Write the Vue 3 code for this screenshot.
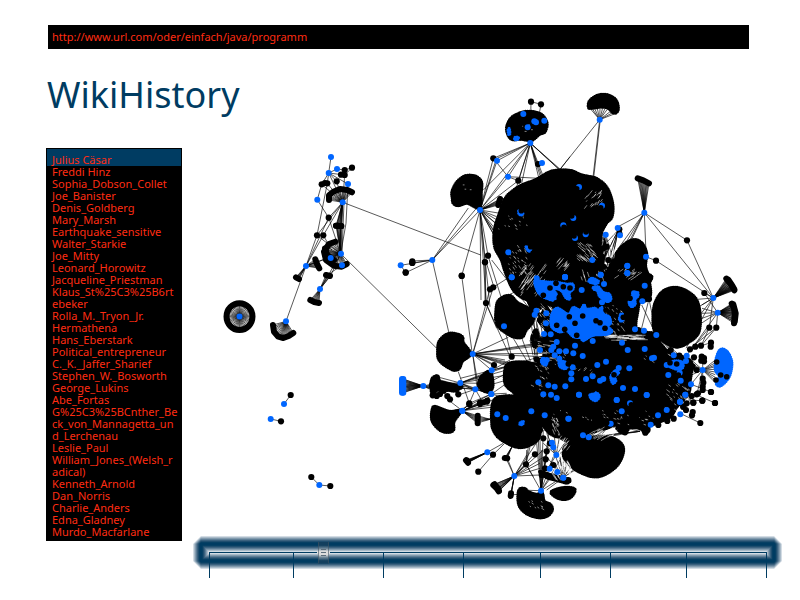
<script setup>
import { ref } from 'vue'

const address = ref('http://www.url.com/oder/einfach/java/programm')
const moment = ref(108)
const selected = ref('Julius Cäsar')

const authors = [
  'Julius Cäsar', 'Freddi Hinz', 'Sophia_Dobson_Collet', 'Joe_Banister', 'Denis_Goldberg',
  'Mary_Marsh', 'Earthquake_sensitive', 'Walter_Starkie', 'Joe_Mitty', 'Leonard_Horowitz',
  'Jacqueline_Priestman', 'Klaus_St%25C3%25B6rtebeker', 'Rolla_M._Tryon_Jr.', 'Hermathena',
  'Hans_Eberstark', 'Political_entrepreneur', 'C._K._Jaffer_Sharief', 'Stephen_W._Bosworth',
  'George_Lukins', 'Abe_Fortas', 'G%25C3%25BCnther_Beck_von_Mannagetta_und_Lerchenau',
  'Leslie_Paul', 'William_Jones_(Welsh_radical)', 'Kenneth_Arnold', 'Dan_Norris',
  'Charlie_Anders', 'Edna_Gladney', 'Murdo_Macfarlane'
]

// Glow around the time line: widest and palest stroke first.
const glow = [
  ['16', '#dde4ea'], ['15', '#c9d4dd'], ['14', '#b3c2ce'], ['13', '#9fb2c1'], ['12', '#8ca3b5'],
  ['11', '#7893a8'], ['10', '#66859c'], ['9', '#547690'], ['8', '#436984'], ['7', '#345d7b'],
  ['6', '#265373'], ['5', '#194b6c'], ['4', '#0e4467'], ['3', '#003c62']
]

// ---- graph -------------------------------------------------------------
// Each sector keeps its coordinates in thirds of a unit, relative to its corner.
const edges = []
const spokes = []
const strings = []
const masses = []
const patches = []
const blacks = []
const blues = []
const bites = []
const scratches = []

let seed = 7
const rnd = () => {
  seed = (seed * 16807) % 2147483647
  return seed / 2147483647
}
const r1 = (n) => Math.round(n * 10) / 10

function smooth(p) {
  const n = p.length
  let d = `M${p[0][0]} ${p[0][1]}`
  for (let i = 0; i < n; i++) {
    const a = p[(i + n - 1) % n], b = p[i], c = p[(i + 1) % n], e = p[(i + 2) % n]
    d += `C${r1(b[0] + (c[0] - a[0]) / 6)} ${r1(b[1] + (c[1] - a[1]) / 6)} ` +
      `${r1(c[0] - (e[0] - b[0]) / 6)} ${r1(c[1] - (e[1] - b[1]) / 6)} ${c[0]} ${c[1]}`
  }
  return d + 'Z'
}

function sector(ox, oy) {
  const pts = (s) => {
    const v = s.trim().split(/[\s,]+/).map(Number)
    const out = []
    for (let i = 0; i < v.length; i += 2) out.push([r1(ox + v[i] / 3), r1(oy + v[i + 1] / 3)])
    return out
  }
  const s = {
    links(...list) {
      for (const l of list) edges.push(pts(l).map((p) => p.join(' ')).join(','))
      return s
    },
    star(hub, ends) {
      const [h] = pts(hub)
      for (const e of pts(ends)) edges.push(`${h[0]} ${h[1]},${e[0]} ${e[1]}`)
      return s
    },
    fan(hub, line, count = 10, color = '#000') {
      const [h] = pts(hub)
      const p = pts(line)
      for (let i = 0; i < count; i++) {
        const t = (i / (count - 1)) * (p.length - 1)
        const k = Math.min(Math.floor(t), p.length - 2)
        const f = t - k
        spokes.push([h[0], h[1], r1(p[k][0] + (p[k + 1][0] - p[k][0]) * f), r1(p[k][1] + (p[k + 1][1] - p[k][1]) * f)])
      }
      strings.push({ points: p.map((q) => q.join(' ')).join(','), color })
      return s
    },
    mass(...list) { for (const l of list) masses.push(smooth(pts(l))); return s },
    patch(...list) { for (const l of list) patches.push(smooth(pts(l))); return s },
    black(l) { blacks.push(...pts(l)); return s },
    blue(l) { blues.push(...pts(l)); return s },
    bite(l) { bites.push(...pts(l)); return s },
    // Pale gaps that show between tightly packed links.
    scratch(x, y, w, h, count, dx, dy) {
      for (let i = 0; i < count; i++) {
        const [a] = pts(`${x + rnd() * w} ${y + rnd() * h}`)
        const k = 0.3 + rnd() * 0.7
        scratches.push([a[0], a[1], r1(a[0] + dx * k), r1(a[1] + dy * k)])
      }
      return s
    }
  }
  return s
}

// Lone ring of pages
const ring = Array.from({ length: 44 }, (_, i) => {
  const a = (i / 44) * Math.PI * 2
  return [r1(239.5 + 13 * Math.cos(a)), r1(316.6 + 13.4 * Math.sin(a))]
})

// West
sector(210, 140)
  .links('363 51 356 99 335 133 322 179 356 233', '356 99 352 130 321 286 288 378', '356 99 381 87 404 90 426 83',
    '356 99 380 124 398 187', '352 130 398 187', '404 105 398 187', '414 132 398 187', '426 83 404 105', '356 99 398 187',
    '356 99 414 132 408 250 392 341', '398 187 356 233', '398 187 321 286', '398 187 340 286 288 378', '398 187 380 257 392 341',
    '398 187 393 341', '402 187 396 341', '394 187 390 341', '398 187 386 341', '356 233 392 341', '321 286 392 341', '340 286 365 330',
    '288 378 228 544', '288 378 392 341', '288 378 350 355', '330 447 354 407 392 341', '330 447 362 407 392 341', '396 376 352 405',
    '356 233 288 378', '398 187 812 345', '392 341 680 625', '335 133 398 187', '356 99 387 103')
  .fan('228 544', '189 555 192 575 205 590 220 594 236 588 250 579', 18)
  .fan('330 447', '301 480 313 486 327 489', 8)
  .fan('330 447', '348 405 360 408', 4)
  .fan('398 187', '357 180 357 166 370 155 390 147 412 150 426 157', 16)
  .fan('392 341', '376 305 357 312 342 335 348 360 372 377 395 380 410 372', 22)
  .fan('288 378', '258 412 267 417', 6)
  .fan('288 378', '316 358 321 372 328 385', 7)
  .fan('398 187', '378 257 394 258', 7)
  .fan('392 341', '378 257 394 258', 7)
  .fan('392 341', '345 325 352 345 372 360', 7)
  .black('335 133 352 130 345 129 380 124 404 90 426 83 404 105 393 104 356 233 321 286 340 286')
  .blue('363 51 381 87 356 99 414 132 322 179 398 187 393 341 396 376 288 378 330 447 228 544 362 354')

// Small separate groups
sector(260, 380)
  .links('72 72 92 45', '32 117 63 124', '154 291 178 315 211 318')
  .black('92 45 63 124 154 291 211 318')
  .blue('72 72 32 117 178 315')

// North
sector(380, 80)
  .links('453 65 483 73', '453 65 452 110', '483 73 476 110', '415 302 384 290 340 235', '384 290 500 296', '157 540 62 556', '157 540 77 578 62 556',
    '157 540 97 543', '157 540 97 549', '157 540 207 760', '570 230 535 275', '315 547 315 665', '324 527 385 720', '245 587 277 822')
  .star('451 189', '340 235 350 243 345 238 300 390 310 330 384 290 415 302 410 320 470 252 478 300 484 300 489 300 494 300 560 285 545 275 550 280 425 310')
  .star('300 390', '340 235 348 240 351 243 384 290 415 302 157 540 245 587 315 547 324 527 360 400 360 425 370 450 360 440 350 480 345 460 345 470 340 440 318 665 330 680 350 410 375 500 303 660')
  .star('157 540', '265 384 290 384')
  .fan('300 390', '360 357 355 375', 7)
  .mass('383 160 382 137 397 112 430 97 460 96 486 106 500 130 494 155 478 162 455 180 425 177 396 177',
    '218 355 217 335 230 308 255 289 284 289 303 305 303 335 298 382 262 369 234 376 220 368')
  .black('453 65 483 73 340 235 97 544 97 549 77 578 245 587 324 527 315 547 415 302 474 252')
  .blue('451 189 351 242 384 290 486 249 300 390 157 540 62 556 385 517 430 102 493 122 443 142 463 124 468 127 555 592 470 595 395 592')
  .patch('384 150 388 145 390 160 386 164', '405 172 415 172 414 178 404 179', '416 392 424 392 429 400 423 406 416 400', '438 500 452 506 446 514')
  .bite('424 392 452 500')
  .scratch(355, 400, 90, 50, 14, 2, 1)
  .scratch(385, 495, 55, 90, 40, 2, 3)
  .scratch(415, 110, 60, 45, 6, 2, 0)
  .scratch(430, 550, 70, 60, 34, -7, 10)
  .scratch(240, 310, 40, 20, 3, 2, 0)

// North-east
sector(560, 80)
  .links('119 119 0 268', '119 119 99 292', '121 119 101 292', '253 398 381 481 460 654', '253 398 165 445', '253 398 460 654', '253 398 175 505',
    '253 398 190 500', '253 398 210 480', '253 398 264 660', '253 398 215 478', '258 530 288 542 460 654')
  .fan('253 398', '233 295 250 301 267 310', 12)
  .star('119 119', '90 85 98 88 105 88 112 85 120 85 128 83 135 86 142 88 150 95 158 98 165 101')
  .mass('87 83 88 66 103 52 125 44 150 48 168 62 174 84 169 97 158 96 145 84 125 80 100 83',
    '-13 272 30 272 65 286 108 296 140 323 157 370 155 410 138 430 125 460 135 500 128 550 100 600 -30 630 -60 635 -90 660 -135 635 -162 580 -175 540 -195 500 -196 450 -181 400 -161 352 -122 320 -73 300 -38 280',
    '150 562 167 524 192 494 222 480 245 490 259 520 256 560 267 600 260 660 150 660')
  .star('175 450', '120 560 130 590 145 590 150 570 140 560 90 540 110 580')
  .star('137 464', '60 500 70 560 110 600 130 590 150 560 160 540')
  .black('381 481 288 542 178 448 178 460 112 480 130 505 140 500 125 530 130 560 145 540 236 566 246 566 190 590')
  .blue('119 119 253 398 137 464 180 466 258 530 202 557 202 579 15 592 122 584 173 444 77 463 97 540 126 377 40 414 57 321 10 436 45 474')
  .scratch(75, 330, 55, 50, 26, -3, 4)
  .scratch(50, 485, 50, 50, 34, 7, 6)
  .scratch(125, 450, 45, 90, 30, -2, 9)
  .scratch(175, 560, 75, 30, 22, -6, 4)
  .scratch(60, 560, 80, 30, 14, 2, 6)
  .bite('50 326 122 383 35 408 12 442 42 468 78 456')

// Centre
sector(560, 260)
  .mass('-68 40 30 20 100 10 180 40 268 45 266 70 243 110 233 150 230 210 285 222 300 250 330 280 365 290 395 310 390 360 385 400 350 440 330 470 290 488 262 498 230 488 180 493 100 515 30 530 -30 520 -75 450 -90 400 -58 360 -84 320 -46 285 -66 250 -40 215 -62 180 -46 140 -72 100')
  .patch('-76 64 -55 64 -30 66 -10 66 20 72 38 72 40 86 28 100 30 116 18 114 4 92 -20 86 -10 105 -20 122 -36 116 -52 110 -68 92',
    '-28 188 -24 160 -8 144 16 158 28 162 40 142 60 150 72 134 80 147 105 144 112 152 126 142 131 162 148 170 152 190 143 198 156 213 140 223 100 226 70 242 62 233 40 230 20 212 0 216 -22 205',
    '86 64 95 54 110 60 116 64 112 70 100 70', '100 82 115 80 130 97 148 102 153 118 143 125 130 118 118 108 112 92 102 88',
    '207 125 221 102 233 97 234 108 225 118 226 132 215 140', '182 162 188 163 185 172 190 180 184 184 178 178',
    '322 312 345 302 368 307 368 323 355 328 335 323', '90 404 112 400 118 410 108 422 94 416', '152 350 165 332 176 338 164 350 168 362 158 370',
    '-3 304 16 306 22 320 14 326 0 320', '-56 300 -50 294 -40 304 -42 316 -54 310')
  .patch('467 300 477 272 490 267 506 280 516 310 508 350 482 378 468 370 478 350 466 330')
  .star('460 114', '413 118 425 135 417 140 433 99 448 203 378 265 400 190')
  .star('473 158', '426 145 426 160 426 175 424 190 469 203 433 99 400 260')
  .star('289 225', '150 228 170 230 190 234 210 236 230 238 330 270 345 280 360 287 320 285 310 290 245 135 267 117')
  .star('448 203', '420 265 380 285').star('469 203', '390 265 425 255')
  .star('428 330', '466 300 466 308 466 315 466 320 466 328 466 336 466 344 466 352 466 360 466 368 360 290 380 287 360 320 360 360 428 380 393 373 410 405 428 290')
  .links('258 -10 258 50', '267 117 243 212 289 225', '267 117 262 70', '410 405 465 429', '393 373 453 396', '385 420 427 422', '360 460 421 489', '376 404 400 428', '453 248 423 257 390 268')
  .fan('460 114', '499 56 513 74 523 91', 18)
  .fan('460 114', '505 59 517 77 523 88', 10)
  .fan('473 158', '515 131 522 145 524 162 522 190', 18)
  .fan('473 158', '520 133 527 160 524 186', 8)
  .mass('280 180 285 132 308 95 345 83 382 95 410 122 420 170 415 218 387 245 350 260 308 242 285 214')
  .black('267 117 433 99 448 203 469 203 235 210 453 248 452 260 423 257 406 260 390 268 332 270 358 287 425 290 432 294 424 302 432 304 410 330 428 356 430 368 428 380 428 390 453 396 465 429 427 422 400 428 410 403 414 400 395 408 380 430 370 440 285 230 398 320 402 292')
  .blue('202 18 202 40 15 51 65 90 122 44 132 72 126 127 254 77 247 124 252 212 225 208 289 225 460 114 473 158 428 330 186 248 18 274 45 257 98 243 68 288 40 280 138 305 112 315 38 322 34 340 34 358 16 379 78 357 98 349 120 362 130 357 176 324 208 325 203 270 254 267 276 295 282 293 189 384 225 387 260 405 170 420 57 404 362 362 359 338 393 373 376 404 360 426 341 286 380 287 378 303 346 318 320 315 325 345 -10 246 -2 274 -26 270 -60 270 -35 376 -16 380 -50 403 -48 222 222 100 214 132 -42 190 -2 296 -16 286')
  .bite('45 190 108 182 30 84 10 80 -30 84 -50 106 -12 70 20 140 -12 128 -2 112 -28 132 8 124 68 168 135 205 120 188 50 226 -10 196 14 208 28 170 98 390 25 312 162 344 355 345 210 115 470 306 482 345 468 360 500 350 190 172 138 150 330 308 350 312')
  .scratch(130, 135, 60, 95, 30, 2, 3)
  .scratch(135, 225, 100, 16, 46, 12, 0)
  .scratch(-60, 270, 80, 45, 14, 2, 3)
  .scratch(40, 325, 60, 20, 6, 3, -3)
  .scratch(240, 280, 100, 30, 8, 3, 2)
  .scratch(0, -10, 30, 30, 14, -6, 7)
  .scratch(-30, 450, 300, 30, 24, 2, 1)
  .scratch(310, 370, 75, 80, 30, 4, 3)
  .scratch(-90, 190, 40, 220, 20, 4, 2)

// West of the centre
sector(380, 260)
  .links('315 5 318 130 390 290', '318 130 350 205', '330 86 278 282', '340 82 278 282', '390 50 340 82', '335 0 475 180', '372 200 395 290', '400 235 445 310', '318 5 342 82',
    '235 335 268 430', '385 105 450 75', '278 282 292 388')
  .star('278 282', '385 232 480 248 480 252 480 257 500 280 495 290 345 315 395 310 375 300 380 310 385 315 390 320 335 331 350 322 292 360')
  .star('241 369', '170 370 190 380 310 345 380 330 300 370 280 390 380 345 170 350 170 400 380 320')
  .star('286 388', '180 360 200 380 240 369 335 331 380 340 268 430 310 430 380 360 334 402 235 405 170 380')
  .star('334 402', '240 369 286 388 380 370 380 400 310 430 268 430 470 440 240 450')
  .star('335 331', '240 369 241 355 390 300 380 320 310 370 500 285')
  .star('247 452', '310 430 380 425 380 405 350 440 268 430 205 420')
  .star('475 367', '440 300 460 150 470 190 480 300 420 220 460 250 530 380 450 240 455 200')
  .star('500 300', '455 180 462 160 456 240 470 120 490 150 440 320 520 200')
  .fan('130 378', '66 357 66 398', 10, '#06f')
  .fan('130 378', '70 357 70 398', 10, '#06f')
  .fan('130 378', '158 372 160 385 158 392', 6)
  .mass('348 165 353 127 373 110 393 109 413 129 447 147 460 165 456 188 437 211 427 230 401 230 364 208 350 188',
    '174 280 177 247 198 225 220 221 246 230 249 248 271 281 247 303 237 325 220 329 193 314 177 298',
    '374 345 382 314 415 307 460 312 478 340 483 370 490 430 440 430 400 395 378 375',
    '395 60 420 40 450 50 490 20 500 60 490 130 462 150 440 115 410 75',
    '456 235 468 210 474 240 465 262', '305 350 330 335 338 375 328 395 308 390 296 375',
    '158 355 172 350 180 365 205 372 235 380 230 392 205 390 170 388 154 378')
  .black('97 8 77 37 245 48 315 6 318 129 330 88 340 82 395 290 342 315 470 298 480 308 500 310 170 352 160 365 155 378 165 390 178 378 190 372 203 385 218 378 190 392 180 402 160 403 202 408 210 418 235 403 240 380 268 430 310 427 300 432 322 422 158 406 170 408 495 130 470 160 480 180 500 190 470 230 465 250 490 240')
  .blue('130 378 241 369 286 388 334 402 335 331 278 282 372 199 469 152 464 164 499 160 555 51 475 367 500 300 512 223 520 260 247 452 395 52')
  .bite('170 385 192 392')
  .scratch(475, 130, 35, 70, 34, 4, 5)
  .scratch(450, 235, 60, 70, 20, 8, 1)
  .scratch(470, 310, 40, 60, 10, 4, 3)
  .scratch(420, 50, 60, 60, 10, -4, 6)

// South-west
sector(380, 390)
  .links('339 194 295 245', '322 187 370 160', '339 194 372 162', '438 223 403 258', '393 315 403 258', '393 315 440 310', '415 300 483 302')
  .star('403 258', '378 205 382 205 438 223 480 220 490 180 500 195 480 255 480 235 465 190 440 195 475 150')
  .star('438 223', '445 170 450 170 440 180 483 302 460 260')
  .star('483 302', '480 150 485 180 490 200 497 208 500 184 520 200 505 160 530 240 550 260 510 100 478 240 540 210 470 160 475 150 490 120')
  .star('550 263', '500 200 520 180 540 200 560 210 580 220 600 230 500 300')
  .star('529 195', '500 130 520 110 540 130 560 150 500 240 490 160')
  .star('247 63', '268 40 330 30 340 15 310 35 300 38')
  .fan('247 63', '293 77 293 100', 7)
  .star('330 88', '296 78 296 82 296 86 296 90 296 94 296 98')
  .fan('322 187', '258 211 264 218', 7)
  .fan('322 187', '262 212 264 217', 3)
  .fan('403 258', '340 285 350 295 356 304', 9)
  .fan('403 258', '344 283 354 295 357 302', 3)
  .fan('403 258', '393 310 392 318', 3)
  .fan('395 172', '374 204 382 205', 5)
  .mass('160 52 170 52 208 65 240 64 221 95 220 119 204 126 181 120 160 98 155 76',
    '336 95 336 55 346 27 375 19 420 22 450 45 478 90 480 125 469 153 430 171 396 166 357 143 340 118',
    '417 302 433 296 446 307 470 314 486 310 492 334 511 344 516 360 502 377 475 382 438 369 417 343',
    '515 305 550 294 581 296 582 308 569 323 545 327 524 318',
    '480 20 600 20 620 110 590 150 550 148 532 120 520 85 490 80',
    '480 245 510 255 540 262 568 270 560 278 530 270 500 262')
  .black('339 194 295 245 438 223 465 193 500 184 497 208 495 235 507 98 485 255 500 255 510 160 480 120 490 145 520 225 268 43 300 38 320 35')
  .blue('247 63 352 73 377 84 454 64 494 76 322 187 403 258 483 302 509 236 532 246 550 263 529 195 520 172 516 158 565 86 334 12 513 14 530 24')
  .patch('420 98 430 94 428 103 420 104')
  .scratch(440, 330, 50, 25, 10, 3, 2)
  .scratch(510, 80, 25, 60, 18, 2, 5)
  .scratch(510, 210, 60, 50, 30, 5, 8)

// South-east
sector(560, 390)
  .mass('12 178 24 157 50 145 100 140 150 142 183 161 189 188 170 227 129 255 92 258 43 236 14 205',
    '170 100 200 90 250 90 266 118 256 128 240 115 210 112 195 128 175 120')
  .star('150 102', '60 145 80 145 100 145 110 140 120 140 200 125 240 124 20 170 0 190 30 160')
  .star('10 263', '40 240 30 235 20 225 10 215 0 205 -20 215')
  .star('240 124', '150 134 160 137 100 140 120 138')
  .black('453 6 465 39 427 32 421 99 398 66 396 76 370 50 330 70 322 93 341 86 295 105 262 120 256 128 195 127 183 118 140 98 120 106 25 270 400 38 378 60')
  .blue('260 15 170 30 294 76 376 14 361 73 360 35 152 101 26 86 69 136 86 142 10 263 57 14 185 64 210 40 320 60 104 12 272 104')
  .bite('118 106 140 98 214 44')
  .scratch(0, 210, 25, 30, 26, 4, 7)
  .scratch(95, 110, 80, 25, 30, -10, 6)
  .scratch(0, 135, 30, 35, 20, -5, 7)
  .scratch(150, 80, 140, 25, 10, 3, 1)
</script>

<template>
  <div class="page">
    <header>
      <input v-model="address" class="address" type="text" aria-label="Address" spellcheck="false">
    </header>

    <main>
      <h1>WikiHistory</h1>
      <ul class="authors">
        <li v-for="name in authors" :key="name">
          <button type="button" :class="{ active: name === selected }" @click="selected = name">{{ name }}</button>
        </li>
      </ul>

      <svg class="graph" viewBox="198 68 552 462" aria-hidden="true">
        <g class="edges">
          <polyline v-for="(e, i) in edges" :key="i" :points="e" />
          <line v-for="(p, i) in spokes" :key="i" :x1="p[0]" :y1="p[1]" :x2="p[2]" :y2="p[3]" />
          <line v-for="(p, i) in ring" :key="i" x1="239.5" y1="316.6" :x2="p[0]" :y2="p[1]" />
        </g>
        <ellipse class="ring" cx="239.5" cy="316.6" rx="13" ry="13.4" />
        <polyline v-for="(s, i) in strings" :key="i" class="string" :points="s.points" :stroke="s.color" />
        <path v-for="(d, i) in masses" :key="i" class="mass" :d="d" />
        <g class="scratches">
          <line v-for="(p, i) in scratches" :key="i" :x1="p[0]" :y1="p[1]" :x2="p[2]" :y2="p[3]" />
        </g>
        <circle v-for="(p, i) in blacks" :key="i" :cx="p[0]" :cy="p[1]" r="3.1" />
        <path v-for="(d, i) in patches" :key="i" class="patch" :d="d" />
        <circle v-for="(p, i) in blues" :key="i" class="blue" :cx="p[0]" :cy="p[1]" r="3" />
        <circle class="blue" cx="239.5" cy="316.6" r="3" />
        <circle v-for="(p, i) in bites" :key="i" :cx="p[0]" :cy="p[1]" r="2.8" />
      </svg>
    </main>

    <footer class="timeline">
      <svg class="glow" aria-hidden="true">
        <rect v-for="[w, c] in glow" :key="w" :stroke-width="w" :stroke="c" />
      </svg>
      <div class="ticks"><i v-for="n in 7" :key="n"></i></div>
      <input v-model="moment" type="range" min="0" max="545" aria-label="Point in time">
    </footer>
  </div>
</template>

<style>
body {
  margin: 0;
  background: #fff;
}
</style>

<style scoped>
.page {
  box-sizing: border-box;
  padding: 25px 18px 20px 46px;
  font-family: "Noto Sans", "Open Sans", sans-serif;
  font-size: 11px;
  line-height: 12px;
}

header {
  padding: 0 33px 0 2px;
}

.address {
  display: block;
  box-sizing: border-box;
  width: 100%;
  height: 24px;
  padding: 0 4px 2px;
  border: 0;
  border-radius: 0;
  background: #000;
  color: #ff2c12;
  font: inherit;
}

main {
  display: grid;
  grid-template-columns: 136px minmax(0, 1fr);
  grid-template-rows: 80px auto;
  column-gap: 16px;
  align-items: start;
  padding: 19px 32px 0 0;
}

h1 {
  margin: 0;
  padding-left: 1px;
  color: #003c62;
  font-size: 36px;
  font-weight: 400;
  line-height: 54px;
  white-space: nowrap;
}

.authors {
  grid-row: 2;
  margin: 0;
  padding: 0 0 2px;
  border: 1px solid #000;
  background: #000;
  list-style: none;
}

.authors button {
  display: block;
  width: 100%;
  padding: 0 3px 0 5px;
  border: 0;
  background: none;
  color: #ff2c12;
  font: inherit;
  text-align: left;
  word-break: break-all;
  cursor: pointer;
}

.authors li:first-child button {
  padding-top: 5px;
}

.authors button.active {
  background: #003c62;
}

.graph {
  display: block;
  grid-area: 1 / 2 / 3 / 3;
  width: 100%;
}

.edges {
  fill: none;
  stroke: #000;
  stroke-width: 1;
  stroke-opacity: 0.65;
}

.ring {
  fill: none;
  stroke: #000;
  stroke-width: 6;
}

.string {
  fill: none;
  stroke-width: 6;
  stroke-linecap: round;
  stroke-linejoin: round;
}

.mass {
  fill: #000;
  stroke: #000;
  stroke-width: 4;
  stroke-linecap: round;
  stroke-dasharray: 0 2;
}

.scratches {
  stroke: #fff;
  stroke-width: 1;
  stroke-opacity: 0.5;
}

.patch {
  fill: #06f;
  stroke: #06f;
  stroke-width: 3;
  stroke-linecap: round;
  stroke-dasharray: 0 2;
}

.blue {
  fill: #06f;
}

.timeline {
  display: grid;
  grid-template-rows: 33px 9px;
  margin-top: -5px;
  padding-left: 147px;
}

.glow {
  display: block;
  grid-area: 1 / 1;
  width: 100%;
  height: 33px;
}

.glow rect {
  x: 8px;
  y: 8px;
  width: calc(100% - 16px);
  height: 17px;
  fill: none;
  stroke-linejoin: bevel;
}

.ticks {
  display: grid;
  grid-area: 1 / 1 / 3 / 2;
  grid-template-columns: 84fr 90fr 80fr 77fr 70fr 76fr 80fr;
  margin: 16px 15px 0 16px;
  border-right: 1px solid #003c62;
}

.ticks i {
  border-top: 1px solid #003c62;
  border-left: 1px solid #003c62;
}

.timeline input {
  grid-area: 1 / 1;
  align-self: center;
  height: 22px;
  margin: 0 15px 0 16px;
  appearance: none;
  background: none;
}

.timeline input::-webkit-slider-thumb {
  appearance: none;
  width: 13px;
  height: 22px;
  border: 0;
  background:
    linear-gradient(#5d6f7d, #5d6f7d) 4px 7px / 5px 1px no-repeat,
    linear-gradient(#5d6f7d, #5d6f7d) 4px 10px / 5px 1px no-repeat,
    linear-gradient(#5d6f7d, #5d6f7d) 4px 13px / 5px 1px no-repeat,
    linear-gradient(90deg, transparent 1px, rgb(60 80 96 / 60%) 1px 2px, transparent 2px 11px, rgb(60 80 96 / 60%) 11px 12px, transparent 12px) 0 0 / 100% 100% no-repeat,
    linear-gradient(#123f5e 15%, #6f8798 30%, #dcdcdc 42% 58%, #6f8798 70%, #123f5e 85%);
  clip-path: polygon(1px 0, 12px 0, 12px 9px, 100% 9px, 100% 12px, 12px 12px, 12px 100%, 1px 100%, 1px 12px, 0 12px, 0 9px, 1px 9px);
}
</style>
